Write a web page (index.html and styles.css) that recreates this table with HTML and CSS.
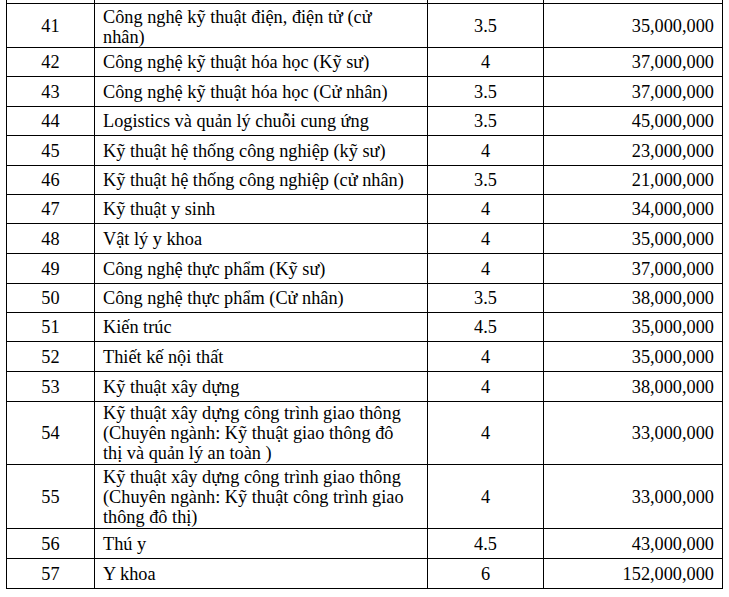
FILE: index.html
```html
<!DOCTYPE html>
<html lang="vi">
<head>
<meta charset="utf-8">
<title>Học phí</title>
<link rel="stylesheet" href="styles.css">
</head>
<body>
<table class="fees">
  <colgroup>
    <col class="c-no">
    <col class="c-name">
    <col class="c-years">
    <col class="c-fee">
  </colgroup>
  <tbody>
    <tr class="stub"><td></td><td></td><td></td><td></td></tr>
    <tr class="r44"><td class="no">41</td><td class="name first">Công nghệ kỹ thuật điện, điện tử (cử nhân)</td><td class="yr">3.5</td><td class="fee">35,000,000</td></tr>
    <tr class="r29"><td class="no">42</td><td class="name">Công nghệ kỹ thuật hóa học (Kỹ sư)</td><td class="yr">4</td><td class="fee">37,000,000</td></tr>
    <tr class="r30"><td class="no">43</td><td class="name">Công nghệ kỹ thuật hóa học (Cử nhân)</td><td class="yr">3.5</td><td class="fee">37,000,000</td></tr>
    <tr class="r29"><td class="no">44</td><td class="name">Logistics và quản lý chuỗi cung ứng</td><td class="yr">3.5</td><td class="fee">45,000,000</td></tr>
    <tr class="r30"><td class="no">45</td><td class="name">Kỹ thuật hệ thống công nghiệp (kỹ sư)</td><td class="yr">4</td><td class="fee">23,000,000</td></tr>
    <tr class="r29"><td class="no">46</td><td class="name">Kỹ thuật hệ thống công nghiệp (cử nhân)</td><td class="yr">3.5</td><td class="fee">21,000,000</td></tr>
    <tr class="r29"><td class="no">47</td><td class="name">Kỹ thuật y sinh</td><td class="yr">4</td><td class="fee">34,000,000</td></tr>
    <tr class="r30"><td class="no">48</td><td class="name">Vật lý y khoa</td><td class="yr">4</td><td class="fee">35,000,000</td></tr>
    <tr class="r30"><td class="no">49</td><td class="name">Công nghệ thực phẩm (Kỹ sư)</td><td class="yr">4</td><td class="fee">37,000,000</td></tr>
    <tr class="r29"><td class="no">50</td><td class="name">Công nghệ thực phẩm (Cử nhân)</td><td class="yr">3.5</td><td class="fee">38,000,000</td></tr>
    <tr class="r29"><td class="no">51</td><td class="name">Kiến trúc</td><td class="yr">4.5</td><td class="fee">35,000,000</td></tr>
    <tr class="r30"><td class="no">52</td><td class="name">Thiết kế nội thất</td><td class="yr">4</td><td class="fee">35,000,000</td></tr>
    <tr class="r30"><td class="no">53</td><td class="name">Kỹ thuật xây dựng</td><td class="yr">4</td><td class="fee">38,000,000</td></tr>
    <tr class="r63"><td class="no">54</td><td class="name">Kỹ thuật xây dựng công trình giao thông (Chuyên ngành: Kỹ thuật giao thông đô thị và quản lý an toàn )</td><td class="yr">4</td><td class="fee">33,000,000</td></tr>
    <tr class="r64"><td class="no">55</td><td class="name">Kỹ thuật xây dựng công trình giao thông (Chuyên ngành: Kỹ thuật công trình giao thông đô thị)</td><td class="yr">4</td><td class="fee">33,000,000</td></tr>
    <tr class="r30"><td class="no">56</td><td class="name">Thú y</td><td class="yr">4.5</td><td class="fee">43,000,000</td></tr>
    <tr class="r30"><td class="no">57</td><td class="name">Y khoa</td><td class="yr">6</td><td class="fee">152,000,000</td></tr>
  </tbody>
</table>
</body>
</html>
```

FILE: styles.css
```css
html, body {
  margin: 0;
  padding: 0;
  background: #fff;
}

body {
  font-family: "Liberation Serif", "Times New Roman", serif;
  font-size: 18.3px;
  color: #000;
}

.fees {
  border-collapse: collapse;
  table-layout: fixed;
  width: 717px;
  margin-left: 6px;
}

.c-no { width: 88px; }
.c-name { width: 333px; }
.c-years { width: 116px; }
.c-fee { width: 179px; }

.fees td {
  border: 1px solid #000;
  padding: 0 8px;
  line-height: 20px;
  vertical-align: middle;
}

.fees .stub td {
  border-top: 0;
  height: 3px;
  padding: 0;
  line-height: 0;
}

.stub { height: 3px; }
.r29 { height: 29px; }
.r30 { height: 30px; }
.r44 { height: 44px; }
.r63 { height: 63px; }
.r64 { height: 64px; }

.no { text-align: center; }
.fees .name {
  text-align: left;
  padding-right: 20px;
}
.fees .first { vertical-align: bottom; }
.yr { text-align: center; }
.fee { text-align: right; }
```
